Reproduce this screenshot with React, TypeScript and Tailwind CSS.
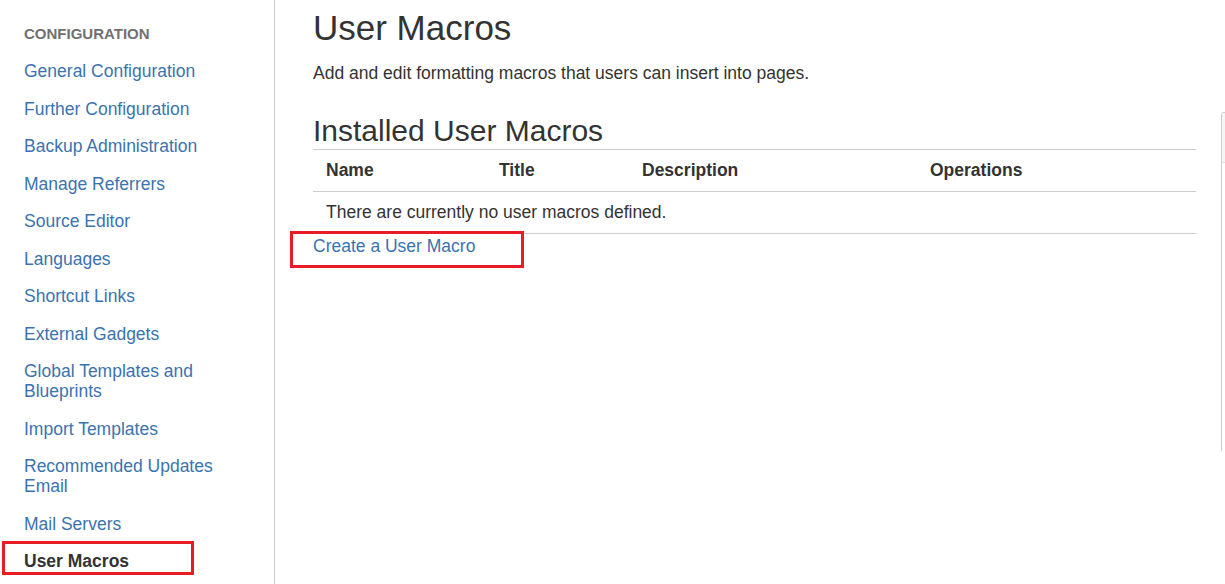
import React from "react";

const items: { label: string; lines?: string[]; active?: boolean }[] = [
  { label: "General Configuration" },
  { label: "Further Configuration" },
  { label: "Backup Administration" },
  { label: "Manage Referrers" },
  { label: "Source Editor" },
  { label: "Languages" },
  { label: "Shortcut Links" },
  { label: "External Gadgets" },
  { label: "Global Templates and Blueprints", lines: ["Global Templates and", "Blueprints"] },
  { label: "Import Templates" },
  { label: "Recommended Updates Email", lines: ["Recommended Updates", "Email"] },
  { label: "Mail Servers" },
  { label: "User Macros", active: true },
];

export default function App() {
  return (
    <div
      className="flex h-[584px] w-[1225px] overflow-hidden bg-white text-[#333]"
      style={{ fontFamily: '"Liberation Sans", Arial, sans-serif' }}
    >
      <aside className="w-[275px] shrink-0 border-r border-[#cccccc] pl-[24px] pt-[24px]">
        <div className="text-[15px] font-bold leading-[20px] tracking-normal text-[#707070]">CONFIGURATION</div>
        <ul className="mt-[8.25px]">
          {items.map((it) => (
            <li key={it.label} className="py-[8.75px] text-[17.5px] leading-[20px]">
              {it.active ? (
                <span className="relative block font-bold text-[#333]">
                  {it.label}
                  <span className="pointer-events-none absolute left-[-22px] top-[-10px] h-[34px] w-[192px] border-[3px] border-[#e81c24]" />
                </span>
              ) : (
                <a className="block text-[#3b73af]" href="#">
                  {it.lines ? it.lines.map((l) => <span key={l} className="block">{l}</span>) : it.label}
                </a>
              )}
            </li>
          ))}
        </ul>
      </aside>
      <main className="flex min-w-0 flex-1 pl-[38px] pt-[8px]">
        <div className="w-[883px] shrink-0">
          <h1 className="text-[35px] font-normal leading-[40px] text-[#333]">User Macros</h1>
          <p className="mt-[12.5px] text-[17.5px] leading-[25px]">Add and edit formatting macros that users can insert into pages.</p>
          <h2 className="mt-[27.5px] text-[30px] font-normal leading-[36px] text-[#333]">Installed User Macros</h2>
          <table className="w-full table-fixed border-collapse text-[17.5px]">
            <thead>
              <tr className="border-y border-[#cccccc]">
                <th className="h-[42px] w-[186px] pl-[13px] text-left font-bold">Name</th>
                <th className="w-[143px] text-left font-bold">Title</th>
                <th className="w-[288px] text-left font-bold">Description</th>
                <th className="text-left font-bold">Operations</th>
              </tr>
            </thead>
            <tbody>
              <tr className="border-b border-[#cccccc]">
                <td colSpan={4} className="h-[42px] pl-[13px]">There are currently no user macros defined.</td>
              </tr>
            </tbody>
          </table>
          <div className="text-[17.5px] leading-[25px]">
            <a href="#" className="relative inline-block text-[#3b73af]">
              Create a User Macro
              <span className="pointer-events-none absolute left-[-23px] top-[-3.5px] h-[37px] w-[234px] border-[3px] border-[#e81c24]" />
            </a>
          </div>
        </div>
        <div className="ml-[25px] mt-[104px] h-[339px] flex-1 rounded-tl-[3px] border-l border-t border-[#cccccc]">
          <div className="h-[50px] border-b border-[#e0e0e0] bg-[#f5f5f5]" />
        </div>
      </main>
    </div>
  );
}
